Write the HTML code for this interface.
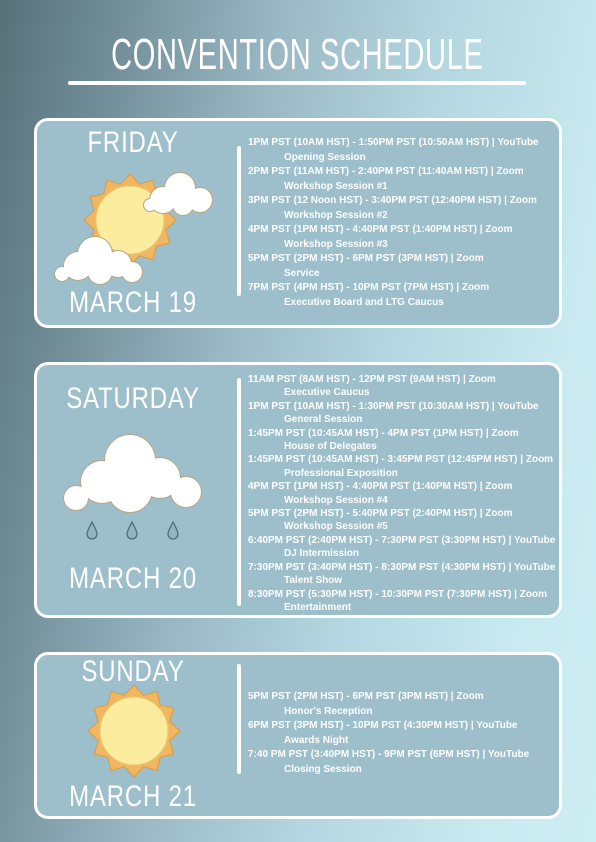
<!DOCTYPE html>
<html><head><meta charset="utf-8"><style>
html,body{margin:0;padding:0}
body{width:596px;height:842px;position:relative;overflow:hidden;background:linear-gradient(100deg,#587179 0%,#6f8c96 15%,#9ab8c4 38%,#b3d6e0 60%,#c9eaf0 85%,#cdeef3 100%);font-family:"Liberation Sans",sans-serif}
.title{position:absolute;left:0;width:596px;top:30px;text-align:center;color:#fff;font-size:44px;letter-spacing:1px;transform:scaleX(.66);transform-origin:296px 0;font-weight:normal}
.uline{position:absolute;left:68px;top:81px;width:458px;height:4px;background:#fff;border-radius:2px}
.card{position:absolute;left:34px;width:522px;background:#9dbfcb;border:3px solid #fff;border-radius:14px}
.day{position:absolute;width:190px;text-align:center;color:#fff;font-size:30px;transform:scaleX(.8);letter-spacing:1px}
.vl{position:absolute;width:4px;background:#fff;border-radius:2px}
.sched{position:absolute;left:248px;color:#fff;font-weight:bold;font-size:10px;letter-spacing:0;line-height:13.4px;white-space:nowrap}
.sched .s{padding-left:36px}
svg{position:absolute;left:0;top:0}
</style></head><body>
<div class="title">CONVENTION SCHEDULE</div>
<div class="uline"></div>

<div class="card" style="top:118px;height:204px"></div>
<div class="card" style="top:362px;height:250px"></div>
<div class="card" style="top:652px;height:161px"></div>

<div class="day" style="left:38px;top:126px">FRIDAY</div>
<div class="day" style="left:38px;top:286px">MARCH 19</div>
<div class="day" style="left:38px;top:382px">SATURDAY</div>
<div class="day" style="left:38px;top:562px">MARCH 20</div>
<div class="day" style="left:38px;top:655px">SUNDAY</div>
<div class="day" style="left:38px;top:780px">MARCH 21</div>

<div class="vl" style="left:237px;top:146px;height:150px"></div>
<div class="vl" style="left:237px;top:378px;height:228px"></div>
<div class="vl" style="left:237px;top:664px;height:110px"></div>

<svg width="596" height="842" viewBox="0 0 596 842">
<defs>
<g id="sun">
<polygon points="46,0 35.7,9.6 39.8,23 26.2,26.2 23,39.8 9.6,35.7 0,46 -9.6,35.7 -23,39.8 -26.2,26.2 -39.8,23 -35.7,9.6 -46,0 -35.7,-9.6 -39.8,-23 -26.2,-26.2 -23,-39.8 -9.6,-35.7 0,-46 9.6,-35.7 23,-39.8 26.2,-26.2 39.8,-23 35.7,-9.6" fill="#f0b660" stroke="#d99a48" stroke-width="1" stroke-linejoin="round"/>
<circle r="34" fill="#fcec9e" stroke="#e8c870" stroke-width="1"/>
</g>
</defs>
<use href="#sun" transform="translate(130 220)"/>
<use href="#sun" transform="translate(134 731)"/>
<g stroke="#b5a684" stroke-width="2" fill="#fff">
<circle cx="180" cy="188" r="15"/><circle cx="163" cy="200" r="13"/><circle cx="200" cy="200" r="12"/><circle cx="150" cy="205" r="6"/><circle cx="183" cy="205" r="10"/>
</g>
<g fill="#fff"><circle cx="180" cy="188" r="15"/><circle cx="163" cy="200" r="13"/><circle cx="200" cy="200" r="12"/><circle cx="150" cy="205" r="6"/><circle cx="183" cy="205" r="10"/></g>
<g stroke="#b5a684" stroke-width="2" fill="#fff">
<circle cx="95" cy="254" r="17"/><circle cx="78" cy="266" r="14"/><circle cx="118" cy="264" r="13"/><circle cx="132" cy="272" r="10"/><circle cx="62" cy="274" r="7"/><circle cx="100" cy="272" r="12"/>
</g>
<g fill="#fff"><circle cx="95" cy="254" r="17"/><circle cx="78" cy="266" r="14"/><circle cx="118" cy="264" r="13"/><circle cx="132" cy="272" r="10"/><circle cx="62" cy="274" r="7"/><circle cx="100" cy="272" r="12"/></g>
<g stroke="#b5a684" stroke-width="2" fill="#fff">
<circle cx="130" cy="460" r="25"/><circle cx="102" cy="482" r="21"/><circle cx="160" cy="478" r="20"/><circle cx="186" cy="492" r="15"/><circle cx="76" cy="498" r="12"/><circle cx="130" cy="490" r="22"/>
</g>
<g fill="#fff"><circle cx="130" cy="460" r="25"/><circle cx="102" cy="482" r="21"/><circle cx="160" cy="478" r="20"/><circle cx="186" cy="492" r="15"/><circle cx="76" cy="498" r="12"/><circle cx="130" cy="490" r="22"/></g>
<g fill="#8fb5c2" stroke="#4f6870" stroke-width="1.2">
<path d="M92 522 C95 528 97 531 97 534 A5 5 0 0 1 87 534 C87 531 89 528 92 522Z"/>
<path d="M132 522 C135 528 137 531 137 534 A5 5 0 0 1 127 534 C127 531 129 528 132 522Z"/>
<path d="M173 522 C176 528 178 531 178 534 A5 5 0 0 1 168 534 C168 531 170 528 173 522Z"/>
</g>
</svg>

<div class="sched" style="top:136px;line-height:14.5px">
<div>1PM PST (10AM HST) - 1:50PM PST (10:50AM HST) | YouTube</div><div class="s">Opening Session</div>
<div>2PM PST (11AM HST) - 2:40PM PST (11:40AM HST) | Zoom</div><div class="s">Workshop Session #1</div>
<div>3PM PST (12 Noon HST) - 3:40PM PST (12:40PM HST) | Zoom</div><div class="s">Workshop Session #2</div>
<div>4PM PST (1PM HST) - 4:40PM PST (1:40PM HST) | Zoom</div><div class="s">Workshop Session #3</div>
<div>5PM PST (2PM HST) - 6PM PST (3PM HST) | Zoom</div><div class="s">Service</div>
<div>7PM PST (4PM HST) - 10PM PST (7PM HST) | Zoom</div><div class="s">Executive Board and LTG Caucus</div>
</div>

<div class="sched" style="top:373px">
<div>11AM PST (8AM HST) - 12PM PST (9AM HST) | Zoom</div><div class="s">Executive Caucus</div>
<div>1PM PST (10AM HST) - 1:30PM PST (10:30AM HST) | YouTube</div><div class="s">General Session</div>
<div>1:45PM PST (10:45AM HST) - 4PM PST (1PM HST) | Zoom</div><div class="s">House of Delegates</div>
<div>1:45PM PST (10:45AM HST) - 3:45PM PST (12:45PM HST) | Zoom</div><div class="s">Professional Exposition</div>
<div>4PM PST (1PM HST) - 4:40PM PST (1:40PM HST) | Zoom</div><div class="s">Workshop Session #4</div>
<div>5PM PST (2PM HST) - 5:40PM PST (2:40PM HST) | Zoom</div><div class="s">Workshop Session #5</div>
<div>6:40PM PST (2:40PM HST) - 7:30PM PST (3:30PM HST) | YouTube</div><div class="s">DJ Intermission</div>
<div>7:30PM PST (3:40PM HST) - 8:30PM PST (4:30PM HST) | YouTube</div><div class="s">Talent Show</div>
<div>8:30PM PST (5:30PM HST) - 10:30PM PST (7:30PM HST) | Zoom</div><div class="s">Entertainment</div>
</div>

<div class="sched" style="top:690px;line-height:14.5px">
<div>5PM PST (2PM HST) - 6PM PST (3PM HST) | Zoom</div><div class="s">Honor's Reception</div>
<div>6PM PST (3PM HST) - 10PM PST (4:30PM HST) | YouTube</div><div class="s">Awards Night</div>
<div>7:40 PM PST (3:40PM HST) - 9PM PST (6PM HST) | YouTube</div><div class="s">Closing Session</div>
</div>
</body></html>
